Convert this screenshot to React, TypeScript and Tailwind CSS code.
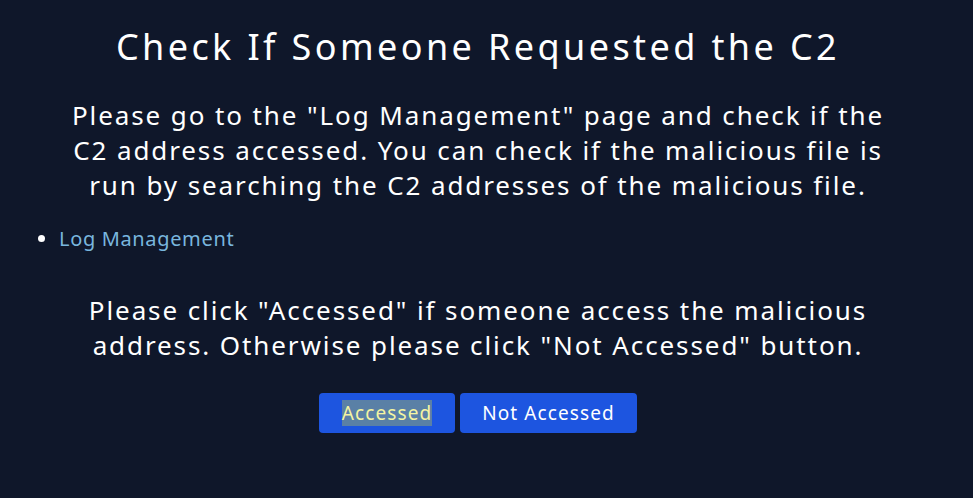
const font = { fontFamily: '"Noto Sans", "Open Sans", sans-serif' };

export default function App() {
  return (
    <div
      className="min-h-[498px] w-full bg-[#0f172a] pl-[19px] pr-[36px] pt-[24px] text-white"
      style={font}
    >
      {/* Title */}
      <h1 className="text-center text-[36px] leading-[45px] font-normal tracking-[3.4px]">
        Check If Someone Requested the C2
      </h1>

      {/* Instructions */}
      <p className="mt-[29px] text-center text-[26px] leading-[35px] tracking-[1.9px]">
        Please go to the "Log Management" page and check if the
        <br />
        C2 address accessed. You can check if the malicious file is
        <br />
        run by searching the C2 addresses of the malicious file.
      </p>

      <ul className="mt-[22px] list-disc pl-[40px] text-[20px] leading-[28px] tracking-[0.65px]">
        <li>
          <a href="#" className="text-[#79b6de]">
            Log Management
          </a>
        </li>
      </ul>

      <p className="mt-[40px] text-center text-[26px] leading-[35px] tracking-[1.9px]">
        Please click "Accessed" if someone access the malicious
        <br />
        address. Otherwise please click "Not Accessed" button.
      </p>

      {/* Answer buttons */}
      <div className="mt-[30px] flex justify-center gap-[5px]">
        <button className="h-[40px] w-[136px] rounded-[4px] bg-[#1d55e0] text-[19px] tracking-[1.1px]">
          <span className="bg-[#5a80a6] text-[#f4f4a2]">Accessed</span>
        </button>
        <button className="h-[40px] w-[177px] rounded-[4px] bg-[#1d55e0] text-[19px] tracking-[1.1px]">
          Not Accessed
        </button>
      </div>
    </div>
  );
}
